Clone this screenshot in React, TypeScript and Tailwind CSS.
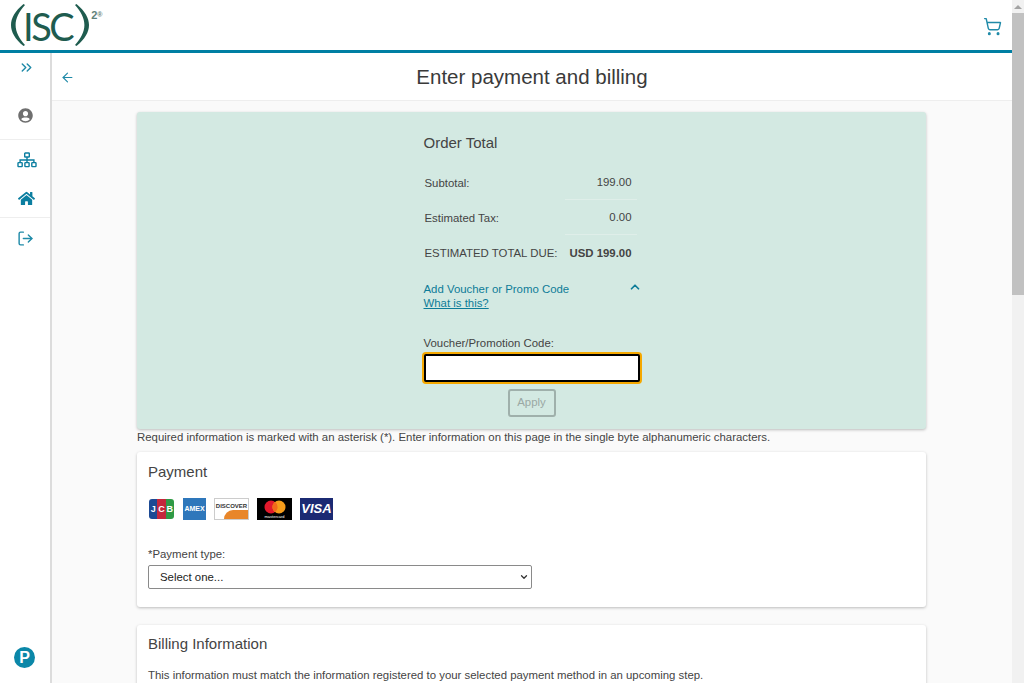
import { ArrowLeft, ChevronDown, ChevronsRight, ChevronUp, LogOut, ShoppingCart } from "lucide-react";
import { FaHome, FaUserCircle } from "react-icons/fa";

function SitemapIcon() {
  return (
    <svg width="20" height="16" viewBox="0 0 20 16" fill="none" stroke="currentColor" strokeWidth="1.4">
      <rect x="7.7" y="1" width="4.6" height="4" rx="0.6" />
      <rect x="1" y="10.6" width="4.2" height="4" rx="0.6" />
      <rect x="7.9" y="10.6" width="4.2" height="4" rx="0.6" />
      <rect x="14.8" y="10.6" width="4.2" height="4" rx="0.6" />
      <path d="M10 5v5.6M3.1 10.6V8h13.8v2.6" />
    </svg>
  );
}

function Logo() {
  return (
    <div className="flex items-start pl-[11px] pt-[4px] text-[#1f5c4f]">
      <svg width="14" height="42" viewBox="0 0 14 42" fill="currentColor">
        <path d="M12.5 0C4 7 0 14 0 21s4 14 12.5 21l1.5-1C8 34 4.6 28 4.6 21S8 8 14 1z" />
      </svg>
      <span className="-ml-[2px] mt-[3px] text-[38px] leading-[38px] tracking-[-2.5px] font-['Lato',sans-serif] font-normal">
        ISC
      </span>
      <svg className="ml-[3px]" width="14" height="42" viewBox="0 0 14 42" fill="currentColor">
        <path d="M1.5 0C10 7 14 14 14 21s-4 14-12.5 21L0 41c6-7 9.4-13 9.4-20S6 8 0 1z" />
      </svg>
      <span className="ml-[2px] mt-[5px] text-[11px] leading-[12px] text-[#5f827a] font-bold">
        2<span className="align-top text-[7px]">®</span>
      </span>
    </div>
  );
}

function PaymentCards() {
  return (
    <div className="mt-[17px] flex items-center">
      <div className="ml-[1px] flex h-[20px] w-[25px] overflow-hidden rounded-[3px] text-center text-[9px] font-bold leading-[20px] text-white">
        <span className="w-1/3 bg-[#1c4a94]">J</span>
        <span className="w-1/3 bg-[#c4283c]">C</span>
        <span className="w-1/3 bg-[#2f9a45]">B</span>
      </div>
      <div className="ml-[9px] h-[22px] w-[23px] bg-[#2e77bb] text-center text-[7px] font-bold leading-[22px] text-white">
        AMEX
      </div>
      <div className="relative ml-[8px] h-[22px] w-[35px] overflow-hidden border border-[#ccc] bg-white text-center text-[6px] font-bold leading-[14px] text-[#333]">
        DISCOVER
        <div className="absolute bottom-0 right-0 h-[9px] w-[24px] rounded-tl-[20px] bg-[#e8862a]" />
      </div>
      <div className="ml-[8px] flex h-[22px] w-[35px] flex-col items-center bg-black pt-[2px]">
        <svg width="24" height="14" viewBox="0 0 24 14">
          <circle cx="8" cy="7" r="6.5" fill="#e2192c" />
          <circle cx="16" cy="7" r="6.5" fill="#f59c1a" />
          <path d="M12 1.8a6.5 6.5 0 0 1 0 10.4a6.5 6.5 0 0 1 0-10.4z" fill="#f26a1b" />
        </svg>
        <span className="text-[4px] leading-[5px] text-white">mastercard</span>
      </div>
      <div className="ml-[8px] h-[22px] w-[33px] bg-[#1b2a73] text-center text-[13px] font-bold italic leading-[22px] text-white">
        VISA
      </div>
    </div>
  );
}

function TotalRow({ label, value, bold, line }: { label: string; value: string; bold?: boolean; line?: boolean }) {
  return (
    <div className="flex h-[35px] items-center justify-between pl-[1px] pr-[3px]">
      <span className="pt-[2px]">{label}</span>
      <span className={`flex h-full w-[72px] items-center justify-end pr-[5px] pt-[2px] ${bold ? "font-bold" : ""} ${line ? "border-b border-[#dfeee9]" : ""}`}>
        {value}
      </span>
    </div>
  );
}

export default function App() {
  return (
    <div className="flex h-[683px] w-[1024px] overflow-hidden bg-[#fafafa] text-[11.4px] text-[#444] font-['Liberation_Sans',Arial,sans-serif]">
      <div className="flex w-[1012px] flex-col">
        <header className="flex h-[53px] shrink-0 items-start justify-between border-b-[3px] border-[#007fa3] bg-white">
          <Logo />
          <ShoppingCart className="mr-[10px] mt-[17px] text-[#1f8aa8]" size={19} strokeWidth={1.8} />
        </header>

        <div className="flex min-h-0 flex-1">
          <aside className="flex w-[52px] shrink-0 flex-col border-r-2 border-[#dcdcdc] bg-white">
            <div className="flex h-[28px] items-center justify-center pl-[3px]">
              <ChevronsRight className="text-[#1f8aa8]" size={17} strokeWidth={2} />
            </div>
            <div className="flex h-[59px] items-center justify-center border-b border-[#eeeeee] pl-[1px] pt-[10px]">
              <FaUserCircle className="text-[#6f6f6f]" size={15} />
            </div>
            <div className="flex h-[39px] items-center justify-center pl-[3px] text-[#0b7ea0]">
              <SitemapIcon />
            </div>
            <div className="flex h-[39px] items-center justify-center border-b border-[#eeeeee] pl-[2px] text-[#0b7ea0]">
              <FaHome size={17} />
            </div>
            <div className="flex h-[39px] items-center justify-center pl-[1px] pt-[2px] text-[#1f8aa8]">
              <LogOut size={17} strokeWidth={2} />
            </div>
            <div className="mt-auto flex justify-center pb-[15px] pr-[1px]">
              <div className="flex h-[21px] w-[21px] items-center justify-center rounded-full bg-[#0b87a8] text-[16px] font-bold leading-none text-white">
                P
              </div>
            </div>
          </aside>

          <main className="min-w-0 flex-1">
            <div className="relative flex h-[48px] items-center justify-center border-b border-[#eeeeee] bg-white pt-[2px]">
              <ArrowLeft className="absolute left-[8px] top-[17px] text-[#1f8aa8]" size={15} strokeWidth={1.8} />
              <h1 className="text-[20.5px] text-[#3a3a3a]">Enter payment and billing</h1>
            </div>

            <div className="pl-[85px] pr-[86px] pt-[11px]">
              <section className="flex h-[317px] justify-center rounded-[3px] bg-[#d3e9e2] pt-[22px] shadow-[0_1px_3px_rgba(0,0,0,0.25)]">
                <div className="w-[216px]">
                  <h2 className="text-[15px] leading-[18px] text-[#444]">Order Total</h2>
                  <div className="mt-[13px]">
                    <TotalRow label="Subtotal:" value="199.00" line />
                    <TotalRow label="Estimated Tax:" value="0.00" line />
                    <TotalRow label="ESTIMATED TOTAL DUE:" value="USD 199.00" bold />
                  </div>
                  <div className="mt-[12px] flex items-start justify-between text-[#0d7c98]">
                    <div className="leading-[14px]">
                      <div>Add Voucher or Promo Code</div>
                      <a className="underline">What is this?</a>
                    </div>
                    <ChevronUp size={14} strokeWidth={3} className="-mr-[2px] mt-[-2px]" />
                  </div>
                  <label className="mt-[26px] block leading-[14px] text-[#444]">Voucher/Promotion Code:</label>
                  <input className="mt-[4px] block h-[28px] w-[216px] rounded-[2px] border-2 border-black bg-white shadow-[0_0_0_2px_#f5a800] outline-none" />
                  <div className="mt-[7px] flex justify-center">
                    <button className="h-[28px] w-[48px] rounded-[3px] border-2 border-[#9fb0ab] text-[11.4px] text-[#9aa8a4]">
                      Apply
                    </button>
                  </div>
                </div>
              </section>

              <p className="mt-[1px] leading-[14px]">
                Required information is marked with an asterisk (*). Enter information on this page in the single byte alphanumeric characters.
              </p>

              <section className="mt-[8px] h-[155px] rounded-[3px] bg-white px-[11px] pt-[11px] shadow-[0_1px_3px_rgba(0,0,0,0.25)]">
                <h2 className="text-[15px] leading-[18px] text-[#444]">Payment</h2>
                <PaymentCards />
                <label className="mt-[27px] block leading-[14px] text-[#444]">*Payment type:</label>
                <div className="relative mt-[4px] w-[384px]">
                  <select className="block h-[24px] w-full appearance-none rounded-[2px] border border-[#8a8a8a] bg-white pl-[11px] pt-[1px] text-[11.4px] text-[#222]">
                    <option>Select one...</option>
                  </select>
                  <ChevronDown className="absolute right-[3px] top-[7px] text-[#333]" size={10} strokeWidth={3} />
                </div>
              </section>

              <section className="mt-[18px] h-[200px] rounded-[3px] bg-white px-[11px] pt-[10px] shadow-[0_1px_3px_rgba(0,0,0,0.25)]">
                <h2 className="text-[15px] leading-[18px] text-[#444]">Billing Information</h2>
                <p className="mt-[15px] leading-[14px]">
                  This information must match the information registered to your selected payment method in an upcoming step.
                </p>
              </section>
            </div>
          </main>
        </div>
      </div>

      <div className="flex w-[12px] shrink-0 flex-col bg-[#f1f1f1]">
        <div className="flex h-[13px] items-center justify-center">
          <div className="h-0 w-0 border-x-[4px] border-b-[4px] border-x-transparent border-b-[#a3a3a3]" />
        </div>
        <div className="h-[282px] bg-[#c1c1c1]" />
      </div>
    </div>
  );
}
